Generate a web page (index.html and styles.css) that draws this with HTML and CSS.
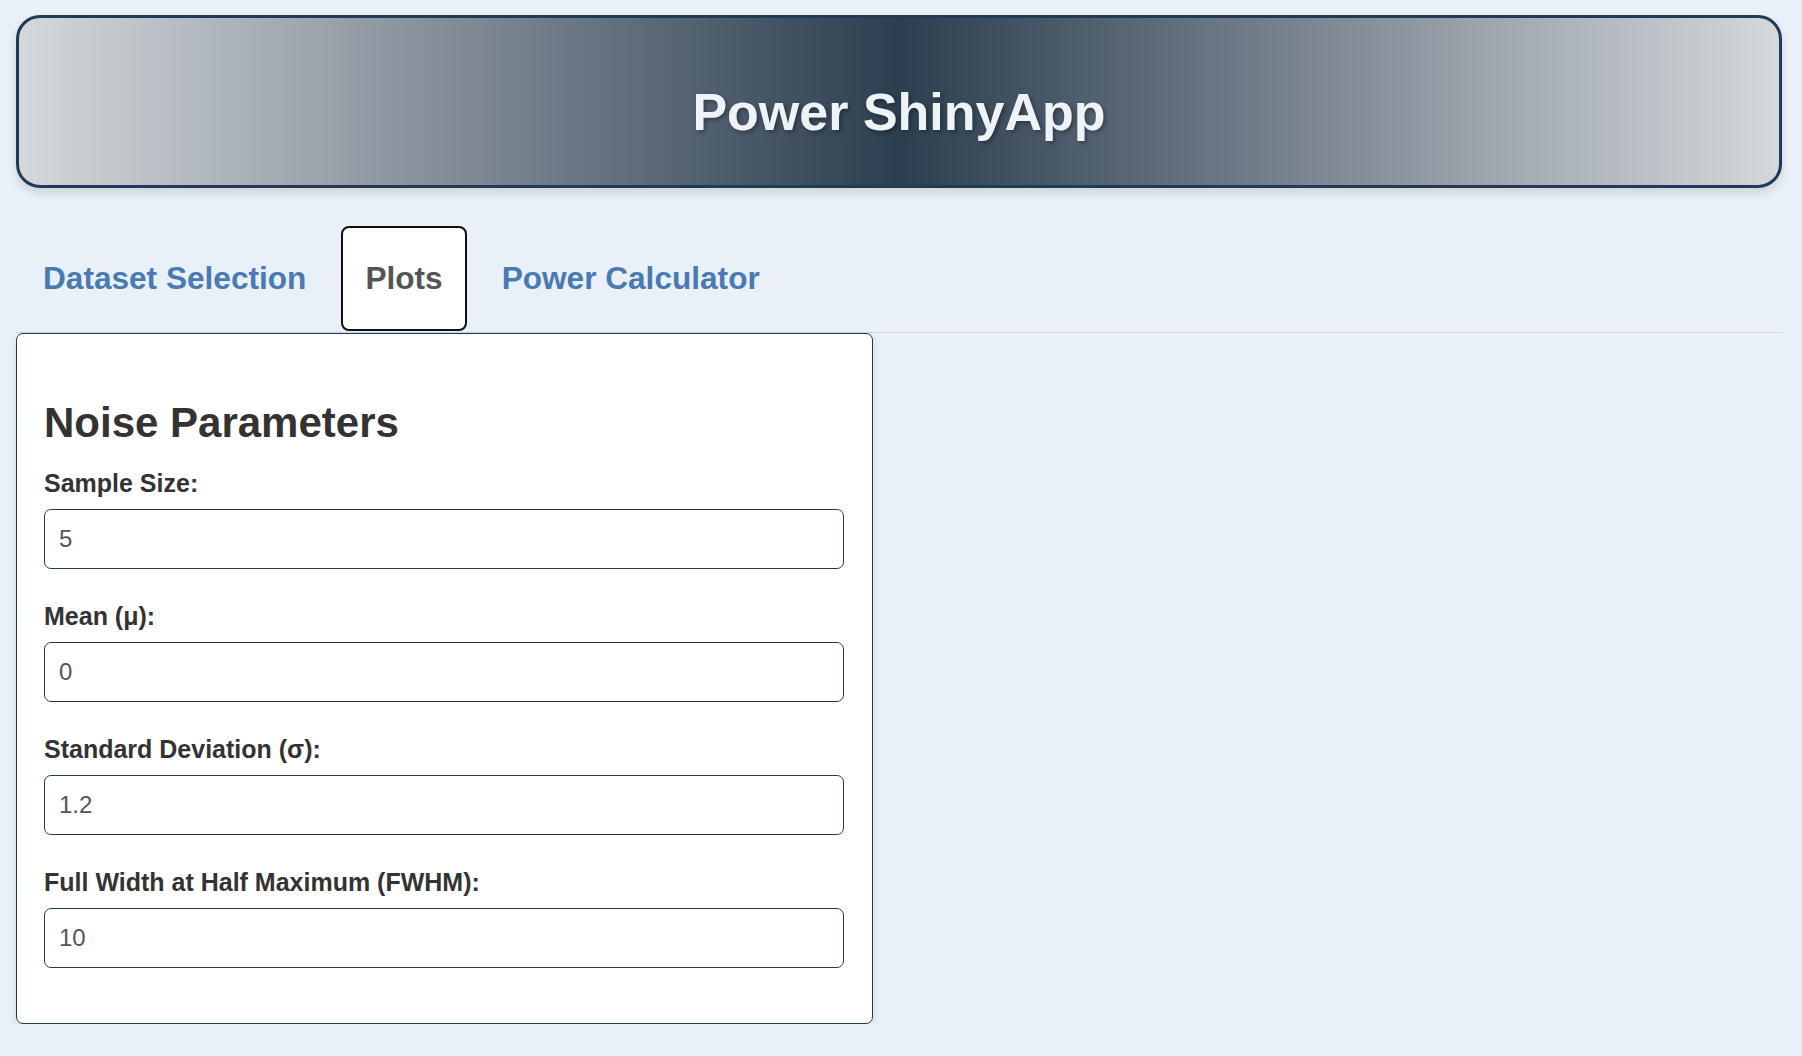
FILE: index.html
```html
<!DOCTYPE html>
<html lang="en">
<head>
<meta charset="utf-8">
<title>Power ShinyApp</title>
<link rel="stylesheet" href="styles.css">
</head>
<body>
<div class="page">
  <header class="app-header">
    <h1 class="app-title">Power ShinyApp</h1>
  </header>

  <nav class="tabs">
    <a class="tab">Dataset Selection</a>
    <a class="tab active">Plots</a>
    <a class="tab">Power Calculator</a>
  </nav>

  <section class="panel">
    <h3 class="panel-title">Noise Parameters</h3>
    <div class="form-group">
      <label class="field-label" for="n">Sample Size:</label>
      <input class="field-input" id="n" type="text" value="5">
    </div>
    <div class="form-group">
      <label class="field-label" for="mu">Mean (μ):</label>
      <input class="field-input" id="mu" type="text" value="0">
    </div>
    <div class="form-group">
      <label class="field-label" for="sd">Standard Deviation (σ):</label>
      <input class="field-input" id="sd" type="text" value="1.2">
    </div>
    <div class="form-group">
      <label class="field-label" for="fwhm">Full Width at Half Maximum (FWHM):</label>
      <input class="field-input" id="fwhm" type="text" value="10">
    </div>
  </section>
</div>
</body>
</html>
```

FILE: styles.css
```css
* { box-sizing: border-box; }

html, body {
  margin: 0;
  padding: 0;
  background: #e9f0f7;
  font-family: "Liberation Sans", Arial, Helvetica, sans-serif;
  color: #333;
}

.page {
  padding: 15px 20px 0 16px;
}

.app-header {
  height: 173px;
  border: 3px solid #1f3b57;
  border-radius: 24px;
  background: linear-gradient(to right, #d5d8dc 0%, #2c3e50 50%, #d5d8dc 100%);
  box-shadow: 0 5px 10px rgba(0, 0, 0, 0.12);
  display: flex;
  align-items: center;
  justify-content: center;
  padding-top: 22px;
}

.app-title {
  margin: 0;
  font-size: 52px;
  font-weight: bold;
  line-height: 1.15;
  color: #eef3f8;
  text-shadow: 2px 2px 4px rgba(0, 0, 0, 0.35);
}

.tabs {
  margin-top: 38px;
  display: flex;
  align-items: flex-start;
  padding-left: 3px;
  height: 107px;
  border-bottom: 1px solid #d3d8dd;
}

.tab {
  height: 105px;
  display: flex;
  align-items: center;
  padding: 0 22px;
  margin-right: 11px;
  border: 2.5px solid transparent;
  border-radius: 8px;
  font-size: 31.6px;
  font-weight: bold;
  color: #4a7ab3;
  cursor: pointer;
}

.tab.active {
  background: #fff;
  border-color: #111;
  color: #555;
}

.panel {
  width: 857px;
  background: #fff;
  border: 1px solid #1f3b57;
  border-radius: 7px;
  box-shadow: 0 4px 10px rgba(0, 0, 0, 0.1);
  padding: 0 28px 25px 27px;
}

.panel-title {
  margin: 66px 0 20px;
  font-size: 42px;
  line-height: 46px;
  font-weight: bold;
  color: #333;
}

.form-group {
  margin-bottom: 30px;
}

.field-label {
  display: block;
  font-size: 25px;
  line-height: 35px;
  font-weight: bold;
  color: #333;
  margin-bottom: 8px;
}

.field-input {
  display: block;
  width: 100%;
  height: 60px;
  border: 1.5px solid #1f3b57;
  border-radius: 7px;
  padding: 0 14px;
  font-family: "Liberation Sans", Arial, Helvetica, sans-serif;
  font-size: 24px;
  color: #555;
  background: #fff;
  outline: none;
}
```
